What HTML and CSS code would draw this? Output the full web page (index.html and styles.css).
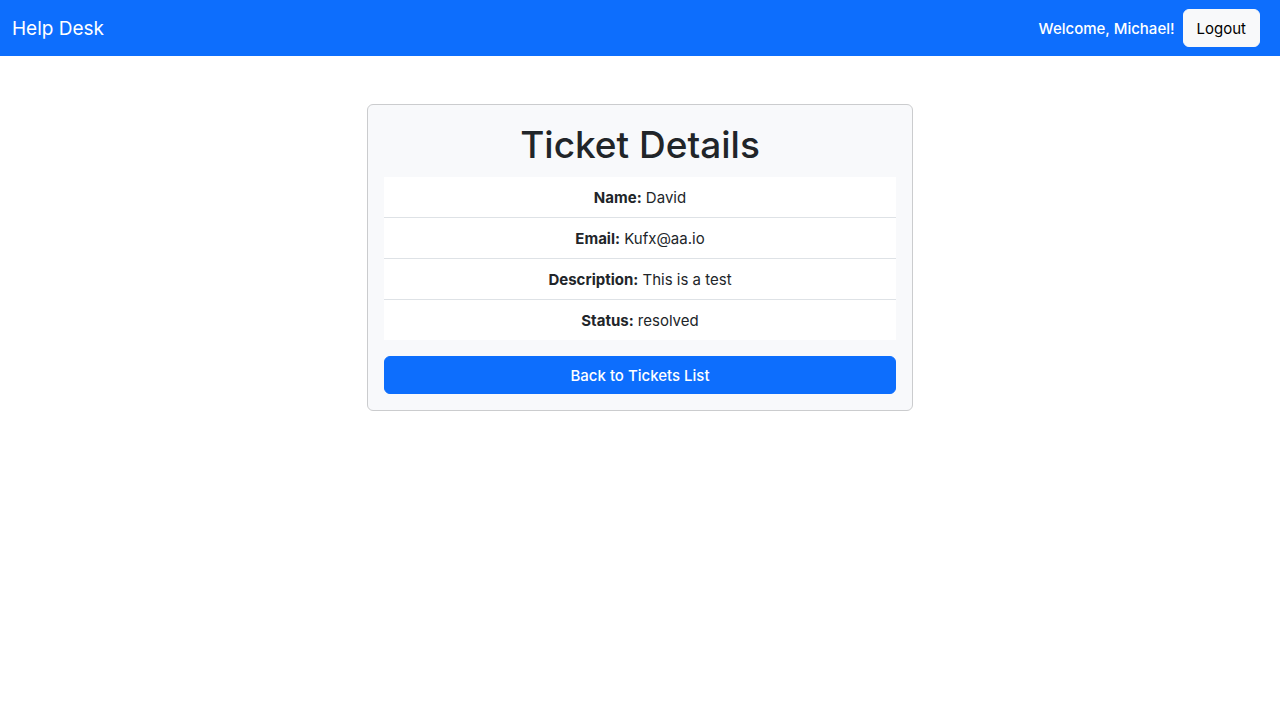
FILE: index.html
```html
<!DOCTYPE html>
<html lang="en">
<head>
<meta charset="utf-8">
<meta name="viewport" content="width=device-width, initial-scale=1">
<title>Help Desk</title>
<link rel="stylesheet" href="styles.css">
</head>
<body>
<nav class="navbar">
  <a class="brand" href="#">Help Desk</a>
  <div class="account">
    <span class="welcome">Welcome, Michael!</span>
    <button class="btn btn-light" type="button">Logout</button>
  </div>
</nav>
<main class="container">
  <section class="card">
    <h1 class="title">Ticket Details</h1>
    <ul class="details">
      <li class="detail"><strong>Name:</strong> David</li>
      <li class="detail"><strong>Email:</strong> Kufx@aa.io</li>
      <li class="detail"><strong>Description:</strong> This is a test</li>
      <li class="detail"><strong>Status:</strong> resolved</li>
    </ul>
    <a class="btn btn-primary" href="#">Back to Tickets List</a>
  </section>
</main>
</body>
</html>
```

FILE: styles.css
```css
*, *::before, *::after { box-sizing: border-box; }

body {
  margin: 0;
  background: #fff;
  color: #212529;
  font-family: Inter, "Liberation Sans", sans-serif;
  font-size: 15px;
  line-height: 24px;
}

.navbar {
  display: flex;
  align-items: center;
  justify-content: space-between;
  padding: 9px 20px 9px 12px;
  background: #0d6efd;
  color: #fff;
}

.brand {
  padding-top: 2px;
  color: #fff;
  font-size: 19px;
  line-height: 30px;
  text-decoration: none;
}

.account {
  display: flex;
  align-items: center;
  gap: 8px;
}

.welcome {
  padding-top: 1px;
  font-weight: 500;
}

.btn {
  display: block;
  padding: 7px 12px 5px;
  border: 1px solid transparent;
  border-radius: 6px;
  font: inherit;
  text-align: center;
  text-decoration: none;
  cursor: pointer;
}

.btn-light {
  padding-inline: 13px;
  background: #f8f9fa;
  border-color: #f8f9fa;
  color: #000;
}

.btn-primary {
  background: #0d6efd;
  border-color: #0d6efd;
  color: #fff;
  font-weight: 500;
}

.container {
  display: flex;
  justify-content: center;
  padding: 48px 12px;
}

.card {
  width: 100%;
  max-width: 546px;
  padding: 16px;
  border: 1px solid #cbccce;
  border-radius: 6px;
  background: #f8f9fb;
  text-align: center;
}

.title {
  margin: 0 0 8px;
  font-size: 37px;
  font-weight: 500;
  line-height: 48px;
}

.details {
  margin: 0 0 16px;
  padding: 0;
  list-style: none;
}

.detail {
  padding: 9px 16px 7px;
  background: #fff;
}

.detail + .detail { border-top: 1px solid #dee2e6; }
```
